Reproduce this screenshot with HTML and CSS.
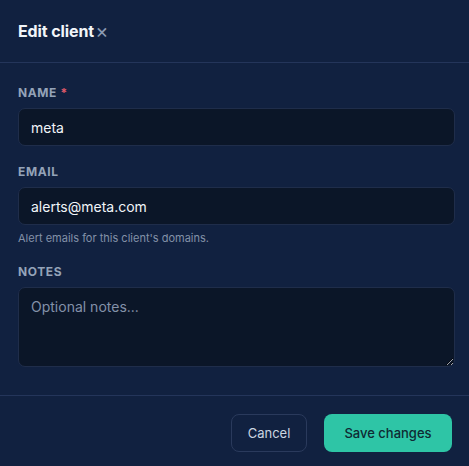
FILE: index.html
```html
<!DOCTYPE html>
<html lang="en">
<head>
    <meta charset="UTF-8">
    <meta name="viewport" content="width=device-width, initial-scale=1.0">
    <title>Edit client</title>
    <link rel="stylesheet" href="styles.css">
</head>
<body>

<div class="modal">
    <div class="modal-header">
        <h2>Edit client</h2>
        <button type="button" class="close-btn" aria-label="Close">&times;</button>
    </div>

    <!-- Client form -->
    <form class="modal-body" id="clientForm">
        <div class="field">
            <label for="name">Name <span class="required">*</span></label>
            <input type="text" id="name" value="meta">
        </div>
        <div class="field">
            <label for="email">Email</label>
            <input type="email" id="email" value="alerts@meta.com">
            <p class="hint">Alert emails for this client's domains.</p>
        </div>
        <div class="field">
            <label for="notes">Notes</label>
            <textarea id="notes" placeholder="Optional notes..."></textarea>
        </div>
    </form>

    <div class="modal-footer">
        <button type="button" class="btn btn-cancel">Cancel</button>
        <button type="submit" form="clientForm" class="btn btn-save">Save changes</button>
    </div>
</div>

</body>
</html>
```

FILE: styles.css
```css
body {
    margin: 0;
    padding: 0;
    font-family: 'Inter', 'Liberation Sans', sans-serif;
    background-color: #112140;
    color: #e2e8f0;
}
.modal {
    background-color: #112140;
    min-height: 466px;
}
.modal-header {
    display: flex;
    align-items: center;
    height: 63px;
    padding: 0 18px;
    box-sizing: border-box;
    border-bottom: 1px solid #24355a;
}
.modal-header h2 {
    margin: 0;
    font-size: 16px;
    font-weight: 700;
    color: #f1f5f9;
    letter-spacing: -0.1px;
}
.close-btn {
    background: none;
    border: none;
    padding: 0;
    margin: 0 0 0 1px;
    color: #8b9ab3;
    font-size: 20px;
    line-height: 20px;
    cursor: pointer;
    font-family: inherit;
}
.modal-body {
    padding: 22px 14px 28px 18px;
}
.field {
    margin-bottom: 18px;
}
.field:last-child {
    margin-bottom: 0;
}
.field label {
    display: block;
    font-size: 12px;
    line-height: 16px;
    font-weight: 700;
    text-transform: uppercase;
    letter-spacing: 0.6px;
    color: #94a3b8;
    margin-bottom: 7px;
}
.required {
    color: #e05a6a;
}
.field input,
.field textarea {
    display: block;
    width: 100%;
    box-sizing: border-box;
    background-color: #0b1628;
    border: 1px solid #1f2d4a;
    border-radius: 7px;
    color: #f1f5f9;
    font-family: inherit;
    font-size: 14px;
    padding: 0 12px;
}
.field input {
    height: 38px;
}
.field textarea {
    height: 80px;
    padding: 10px 12px;
    resize: vertical;
}
.field textarea::placeholder {
    color: #8391a8;
}
.hint {
    margin: 5px 0 0 0;
    font-size: 11px;
    line-height: 16px;
    color: #8391a8;
}
.modal-footer {
    display: flex;
    justify-content: flex-end;
    gap: 17px;
    padding: 18px 17px 14px;
    border-top: 1px solid #24355a;
}
.btn {
    height: 38px;
    border-radius: 8px;
    font-family: inherit;
    font-size: 13px;
    cursor: pointer;
}
.btn-cancel {
    width: 76px;
    background: transparent;
    border: 1px solid #2a3a5c;
    color: #cbd5e1;
}
.btn-save {
    width: 128px;
    background-color: #2ec5a6;
    border: none;
    color: #0f2a33;
    font-weight: 500;
}
```
